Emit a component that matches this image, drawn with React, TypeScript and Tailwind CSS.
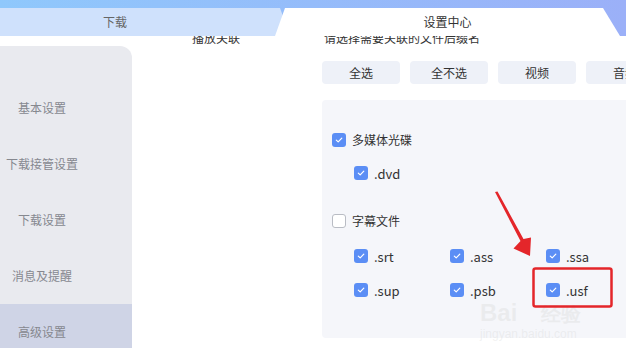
import React from "react";

const Check = ({ checked = true }: { checked?: boolean }) =>
  checked ? (
    <span className="flex h-[14px] w-[14px] shrink-0 items-center justify-center rounded-[3px] bg-[#5b8ef5]">
      <svg width="10" height="10" viewBox="0 0 10 10">
        <path d="M2.3 5.1 L4.2 6.9 L7.8 3.2" fill="none" stroke="#ffffff" strokeWidth="1.2" strokeLinecap="round" strokeLinejoin="round" />
      </svg>
    </span>
  ) : (
    <span className="h-[14px] w-[14px] shrink-0 rounded-[3px] border border-[#b9bcc4] bg-white" />
  );

const Ext = ({ label }: { label: string }) => (
  <div className="flex w-[98px] items-center gap-[6px]">
    <Check />
    <span className="text-[13px] leading-none text-[#333]">{label}</span>
  </div>
);

export default function App() {
  const nav = ["基本设置", "下载接管设置", "下载设置", "消息及提醒", "高级设置"];
  return (
    <div
      className="relative h-[348px] w-[626px] overflow-hidden bg-white"
      style={{ fontFamily: '"Noto Sans CJK SC", "Noto Sans", sans-serif' }}
    >
      {/* header */}
      <div className="relative z-10 flex h-9 items-end bg-[linear-gradient(90deg,#8fc8fc,#9bb0f8)] pt-2">
        <div className="flex h-7 w-[290px] shrink-0 items-center justify-center rounded-tr-[8px] bg-[#cfe1fc] pr-[60px] text-[12px] text-[#666] [clip-path:polygon(0_0,280px_0,290px_100%,0_100%)]">
          下载
        </div>
        <div className="-ml-[15px] flex h-7 w-[345px] shrink-0 items-center justify-center bg-white text-[12px] text-[#333] [clip-path:polygon(10px_0,328px_0,100%_100%,0_100%)]">
          设置中心
        </div>
      </div>

      {/* body */}
      <div className="flex h-[312px]">
        <div className="mt-[10px] w-[132px] shrink-0 rounded-tr-[12px] bg-[#e9eaef] pt-[34px]">
          {nav.map((n, i) => (
            <div
              key={n}
              className={`flex h-[56px] w-full items-center ${i === 4 ? "bg-[#cfd4e6]" : ""}`}
            >
              <span className="w-[84px] text-center text-[12px] text-[#86888f]">{n}</span>
            </div>
          ))}
        </div>

        <div className="flex min-w-0 flex-1 flex-col">
          <div className="-mt-[6px] flex h-[15px] text-[12px] leading-[15px] text-[#333]">
            <span className="w-[190px] pl-[60px]">播放关联</span>
            <span className="pl-[2px]">请选择需要关联的文件后缀名</span>
          </div>

          <div className="ml-[190px] mt-[16px] flex gap-[10px] overflow-hidden">
            {["全选", "全不选", "视频", "音频"].map((b) => (
              <div
                key={b}
                className="flex h-[23px] w-[78px] shrink-0 items-center justify-center rounded-[4px] bg-[#eef1f8] text-[12px] text-[#333]"
              >
                {b}
              </div>
            ))}
          </div>

          <div className="ml-[190px] mt-[16px] h-[238px] w-[320px] rounded-[4px] bg-[#f5f6fa] pt-[30px]">
            <div className="flex h-[20px] items-center gap-[6px] pl-[10px]">
              <Check />
              <span className="text-[12px] text-[#333]">多媒体光碟</span>
            </div>
            <div className="mt-[13px] flex h-[20px] items-center pl-[32px]">
              <Ext label=".dvd" />
            </div>
            <div className="mt-[28px] flex h-[20px] items-center gap-[6px] pl-[10px]">
              <Check checked={false} />
              <span className="text-[12px] text-[#333]">字幕文件</span>
            </div>
            <div className="mt-[15px] flex h-[20px] items-center pl-[32px]">
              <Ext label=".srt" />
              <Ext label=".ass" />
              <Ext label=".ssa" />
            </div>
            <div className="mt-[14px] flex h-[20px] items-center pl-[32px]">
              <Ext label=".sup" />
              <Ext label=".psb" />
              <Ext label=".usf" />
            </div>
          </div>
        </div>
      </div>

      {/* watermark */}
      <div className="pointer-events-none absolute left-[480px] top-[301px] select-none text-[rgba(215,215,215,0.35)]">
        <div className="text-[24px] font-bold leading-none" style={{ fontFamily: '"Liberation Sans", sans-serif' }}>
          Bai<span className="ml-[24px] text-[20px]">经验</span>
        </div>
        <div className="mt-[3px] text-[12px] leading-none" style={{ fontFamily: '"Liberation Sans", sans-serif' }}>
          jingyan.baidu.com
        </div>
      </div>

      {/* annotation */}
      <svg className="pointer-events-none absolute left-0 top-0" width="626" height="348" viewBox="0 0 626 348">
        <polygon
          points="495,192 497.5,191.5 523.5,239 531,237.5 530,256 513.5,248.5 520.5,241"
          fill="#e4262a"
        />
        <rect x="533.5" y="268.5" width="78" height="38" rx="2" fill="none" stroke="#e4262a" strokeWidth="2.5" />
      </svg>
    </div>
  );
}
